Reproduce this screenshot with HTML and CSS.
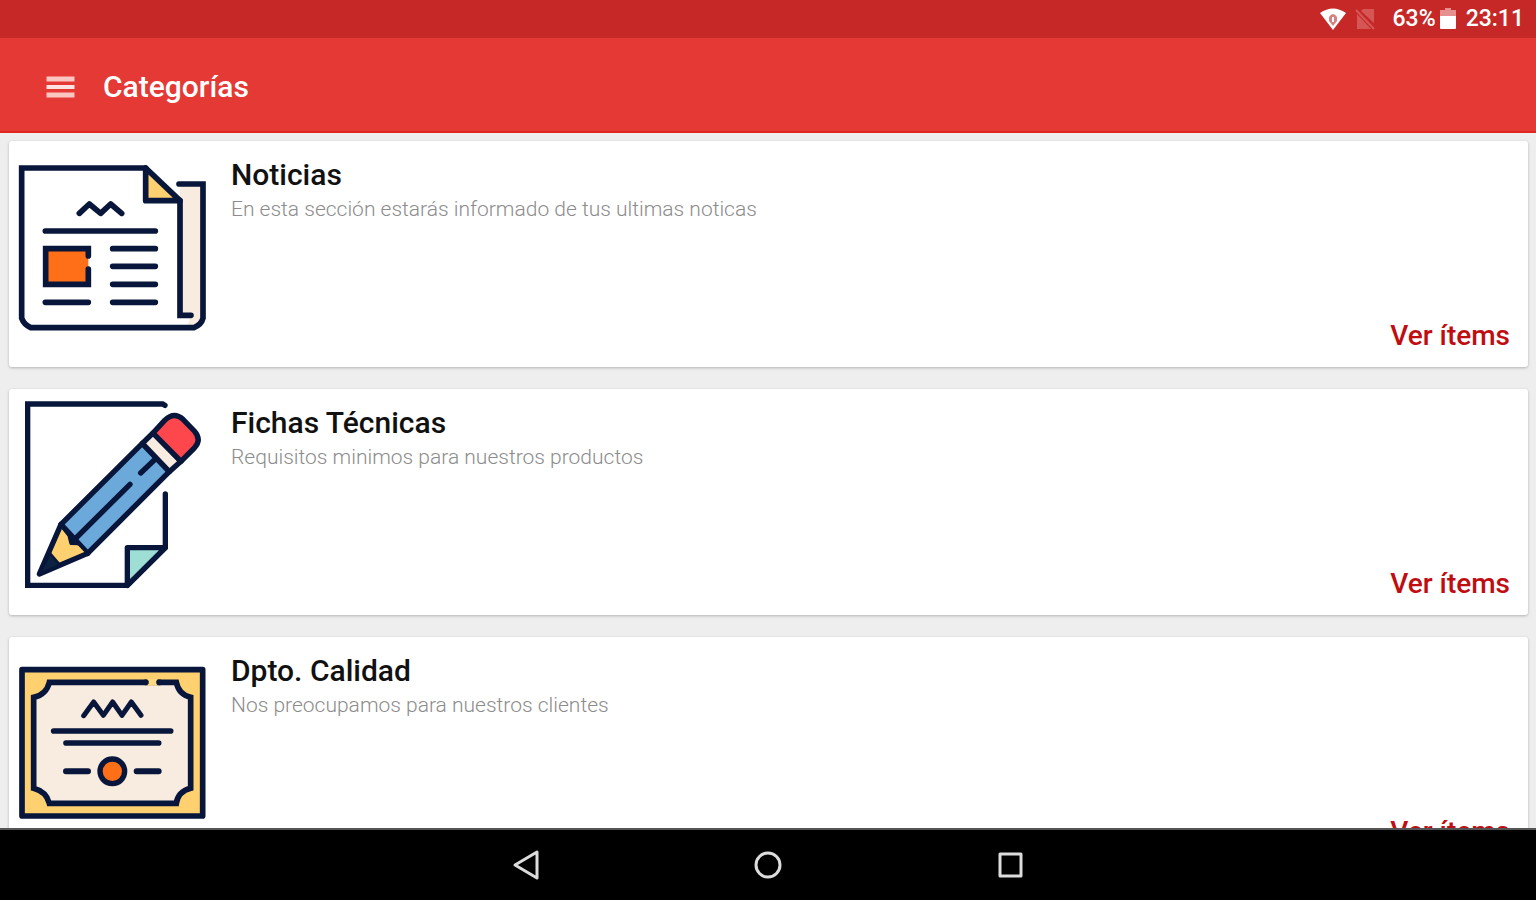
FILE: index.html
```html
<!DOCTYPE html>
<html lang="es">
<head>
<meta charset="utf-8">
<meta name="viewport" content="width=device-width, initial-scale=1">
<title>Categorías</title>
<link rel="stylesheet" href="styles.css">
</head>
<body>
<div class="status">
  <svg class="wifi" viewBox="0 0 28 24" aria-hidden="true">
    <path d="M1 6Q14-3 27 6L14 23Z" fill="#fff"/>
    <path d="M10 14V10q4-6 8 0v4l-4 5z" fill="#d98080"/>
    <path d="M14 10v5" stroke="#fff" stroke-width="2"/>
  </svg>
  <svg class="sim" viewBox="0 0 20 22" aria-hidden="true">
    <path d="M8 1H19V15L6 3ZM2 6L16 21H2Z" fill="#d65656"/>
    <path d="M1 2L19 21" stroke="#d65656" stroke-width="2"/>
  </svg>
  <span class="charge">63%</span>
  <svg class="battery" viewBox="0 0 16 22" aria-hidden="true">
    <path d="M5 0h6v2h5v7H0V2h5z" fill="#e58f8f"/>
    <path d="M0 8h16v12q0 1-1 1H1q-1 0-1-1z" fill="#fff"/>
  </svg>
  <span class="clock">23:11</span>
</div>
<header class="appbar">
  <button class="menu" type="button" aria-label="Menú">
    <svg viewBox="0 0 28 22" aria-hidden="true">
      <path d="M0 3H28M0 19H28" stroke="#fbc5c2" stroke-width="5"/>
      <path d="M0 11H28" stroke="#fde4e2" stroke-width="4"/>
    </svg>
  </button>
  <h1 class="heading">Categorías</h1>
</header>
<main class="list">
  <article class="card">
    <svg class="picture" viewBox="51 57 576 624" aria-hidden="true">
      <g fill="none" stroke="#07163a" stroke-width="17" stroke-linecap="round" stroke-linejoin="round">
        <path d="M540 162H608V565L582 592H560L575 556H540Z" fill="#f8ebe0" stroke="none"/>
        <path d="M437 114V212H540Z" fill="#ffd06f"/>
        <path d="M437 114H65V565Q72 584 92 593H582Q604 584 609 565V162H537" stroke-linejoin="miter"/>
        <path d="M540 212V556H573" stroke-linejoin="miter"/>
        <path d="M238 250L268 222L302 250L332 222L365 250"/>
        <path d="M136 303H466M338 356H466M338 409H466M338 463H466M338 517H466M136 517H265"/>
        <path d="M137 356H265V463H137Z" fill="#ff6f17" stroke="none"/>
        <path d="M265 378V356H137V463H265V417" stroke-linejoin="miter"/>
      </g>
    </svg>
    <div class="info">
      <h2 class="title">Noticias</h2>
      <p class="text">En esta sección estarás informado de tus ultimas noticas</p>
      <a class="more" href="#noticias">Ver ítems</a>
    </div>
  </article>
  <article class="card">
    <svg class="picture" viewBox="51 51 576 624" aria-hidden="true">
      <g fill="none" stroke="#07163a" stroke-width="16" stroke-linecap="round" stroke-linejoin="round">
        <path d="M495 76L488 72H83V616H382L496 503V342" stroke-linejoin="miter"/>
        <path d="M382 503H496L382 616Z" fill="#9fded4"/>
        <path d="M183 433L427 190L508 275L263 520Z" fill="#6aa9da"/>
        <path d="M183 433L118 582L263 520L252 512L236 496L210 494L205 472L186 444Z" fill="#ffd06f" stroke="none"/>
        <path d="M263 520L118 582L183 433"/>
        <path d="M150 520L118 582L180 555Z" fill="#0c2340" stroke-width="8"/>
        <path d="M186 440L207 466L213 490L236 491L258 514" stroke-width="10"/>
        <path d="M207 466L230 474L236 491L213 490Z" fill="#07163a" stroke-width="6"/>
        <path d="M427 190L459 159L543 244L508 275Z" fill="#f8ebe0"/>
        <path d="M459 159L494 121Q522 94 549 118L583 153Q606 179 583 204L543 244Z" fill="#fd474c"/>
        <path d="M228 474L390 313M422 279L463 240"/>
      </g>
    </svg>
    <div class="info">
      <h2 class="title">Fichas Técnicas</h2>
      <p class="text">Requisitos minimos para nuestros productos</p>
      <a class="more" href="#fichas">Ver ítems</a>
    </div>
  </article>
  <article class="card">
    <svg class="picture" viewBox="51 75 576 624" aria-hidden="true">
      <g fill="none" stroke="#07163a" stroke-width="17" stroke-linecap="round" stroke-linejoin="round">
        <path d="M66 149H608V588H66Z" fill="#ffd06f"/>
        <path d="M148 187H529Q536 224 572 232V505Q534 515 529 550H148Q139 515 101 505V232Q139 224 148 187Z" fill="#f8ebe0" stroke-linejoin="miter"/>
        <path d="M442 187H472" stroke="#ffd883" stroke-width="20" stroke-linecap="butt"/>
        <path d="M436 187H438M477 187H480"/>
        <path d="M251 287L281 246L310 286L338 246L366 286L394 246L423 286" stroke-width="15"/>
        <path d="M161 333H512M198 369H476"/>
        <path d="M198 454H264M410 454H476" stroke-width="18"/>
        <circle cx="337" cy="454" r="37" fill="#ff6f17" stroke-width="16"/>
      </g>
    </svg>
    <div class="info">
      <h2 class="title">Dpto. Calidad</h2>
      <p class="text">Nos preocupamos para nuestros clientes</p>
      <a class="more" href="#calidad">Ver ítems</a>
    </div>
  </article>
</main>
<nav class="keys">
  <button class="key" type="button" aria-label="Atrás">
    <svg viewBox="0 0 32 32" aria-hidden="true"><path d="M27 3V29L5 16Z"/></svg>
  </button>
  <button class="key" type="button" aria-label="Inicio">
    <svg viewBox="0 0 32 32" aria-hidden="true"><circle cx="16" cy="16" r="12"/></svg>
  </button>
  <button class="key" type="button" aria-label="Recientes">
    <svg viewBox="0 0 32 32" aria-hidden="true"><path d="M6 5H27V27H6Z"/></svg>
  </button>
</nav>
</body>
</html>
```
FILE: styles.css
```css
* { box-sizing: border-box; }

body {
  margin: 0;
  height: 100vh;
  display: flex;
  flex-direction: column;
  overflow: hidden;
  background: #eee;
  font-family: Roboto, "Liberation Sans", sans-serif;
}

svg { display: block; flex: none; }

button {
  padding: 0;
  border: 0;
  background: none;
}

.status {
  flex: none;
  height: 38px;
  padding: 0 12px;
  display: flex;
  align-items: center;
  justify-content: flex-end;
  background: #c62828;
  color: #fff;
  font-size: 23px;
  line-height: 38px;
  font-weight: 500;
}

.wifi { width: 28px; height: 24px; }
.sim { width: 20px; height: 22px; margin: 0 18px 0 8px; }
.battery { width: 16px; height: 22px; margin: 0 10px 0 4px; }

.appbar {
  flex: none;
  height: 95px;
  padding: 4px 46px 0;
  display: flex;
  align-items: center;
  gap: 28px;
  background: #e53935;
  border-bottom: 2px solid #e02620;
}

.menu svg { width: 29px; height: 22px; }

.heading {
  margin: 0;
  color: #fff;
  font-size: 30px;
  line-height: 36px;
  font-weight: 500;
}

.list {
  flex: 1;
  min-height: 0;
  overflow: hidden;
  padding: 8px 8px 0 9px;
  display: flex;
  flex-direction: column;
  gap: 22px;
}

.card {
  flex: none;
  min-height: 226px;
  padding: 8px 18px 10px 8px;
  display: flex;
  gap: 22px;
  background: #fff;
  border-radius: 3px;
  box-shadow: 0 1px 3px rgba(0, 0, 0, 0.25);
}

.picture { width: 192px; height: 208px; }

.info {
  flex: 1;
  padding-top: 8px;
  display: flex;
  flex-direction: column;
}

.title {
  margin: 0;
  color: #111;
  font-size: 30px;
  line-height: 36px;
  font-weight: 500;
}

.text {
  margin: 0;
  color: #8c8c8c;
  font-size: 21px;
  line-height: 32px;
  font-weight: 300;
}

.more {
  margin-top: auto;
  align-self: flex-end;
  color: #bf0d12;
  font-size: 28px;
  line-height: 42px;
  font-weight: 500;
  text-decoration: none;
}

.keys {
  flex: none;
  height: 72px;
  display: flex;
  justify-content: center;
  background: #000;
  border-top: 2px solid #555;
}

.key {
  width: 242px;
  display: flex;
  align-items: center;
  justify-content: center;
}

.key svg {
  width: 32px;
  height: 32px;
  fill: none;
  stroke: #dcdcdc;
  stroke-width: 3;
  stroke-linejoin: round;
}
```
